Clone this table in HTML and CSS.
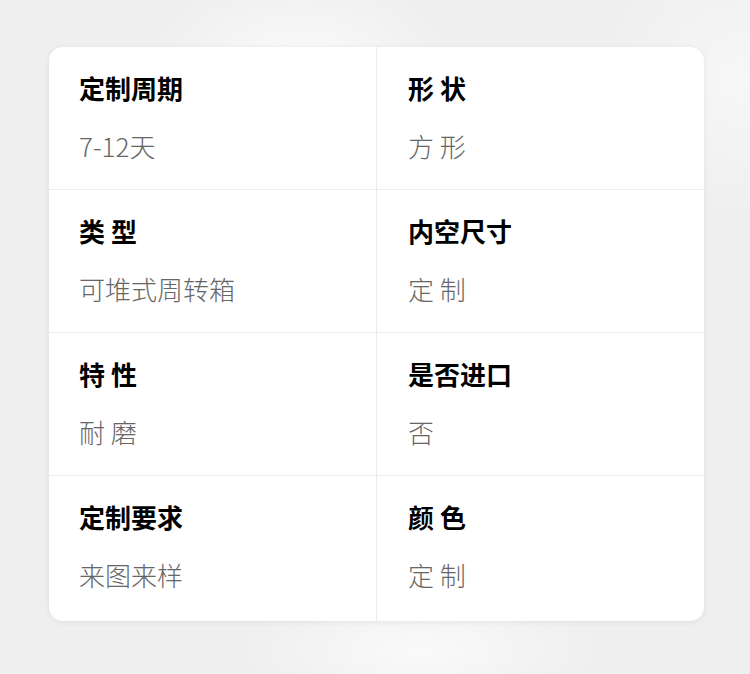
FILE: index.html
```html
<!DOCTYPE html>
<html lang="zh-CN">
<head>
<meta charset="utf-8">
<link rel="stylesheet" href="styles.css">
</head>
<body>
<div class="page">
  <div class="card">
    <div class="cell left"><div class="label">定制周期</div><div class="value">7-12天</div></div>
    <div class="cell right"><div class="label">形 状</div><div class="value">方 形</div></div>
    <div class="cell left"><div class="label">类 型</div><div class="value">可堆式周转箱</div></div>
    <div class="cell right"><div class="label">内空尺寸</div><div class="value">定 制</div></div>
    <div class="cell left"><div class="label">特 性</div><div class="value">耐 磨</div></div>
    <div class="cell right"><div class="label">是否进口</div><div class="value">否</div></div>
    <div class="cell left last"><div class="label">定制要求</div><div class="value">来图来样</div></div>
    <div class="cell right last"><div class="label">颜 色</div><div class="value">定 制</div></div>
  </div>
</div>
</body>
</html>
```

FILE: styles.css
```css
html, body {
  margin: 0;
  padding: 0;
}
body {
  width: 750px;
  height: 674px;
  overflow: hidden;
  font-family: "Noto Sans CJK SC", "Noto Sans", sans-serif;
  background:
    radial-gradient(ellipse 220px 120px at 300px 60px, rgba(255,255,255,0.7), rgba(255,255,255,0) 70%),
    radial-gradient(ellipse 260px 90px at 420px 650px, rgba(255,255,255,0.7), rgba(255,255,255,0) 70%),
    radial-gradient(ellipse 200px 200px at 740px 80px, rgba(255,255,255,0.5), rgba(255,255,255,0) 70%),
    #efefef;
}
.page {
  padding: 47px 0 0 49px;
}
.card {
  width: 655px;
  height: 574px;
  background: #fff;
  border-radius: 14px;
  box-shadow: 0 1px 6px rgba(0,0,0,0.07);
  display: grid;
  grid-template-columns: 328px 327px;
  grid-template-rows: 143px 143px 143px 145px;
  overflow: hidden;
}
.cell {
  box-sizing: border-box;
  padding-top: 23px;
  border-bottom: 1px solid #ececec;
}
.cell.left {
  padding-left: 30px;
  border-right: 1px solid #ececec;
}
.cell.right {
  padding-left: 31px;
}
.cell.last {
  border-bottom: none;
}
.label {
  font-size: 26px;
  line-height: 36px;
  font-weight: 700;
  color: #000;
}
.value {
  margin-top: 22px;
  font-size: 26px;
  line-height: 36px;
  font-weight: 300;
  color: #666;
}
```
